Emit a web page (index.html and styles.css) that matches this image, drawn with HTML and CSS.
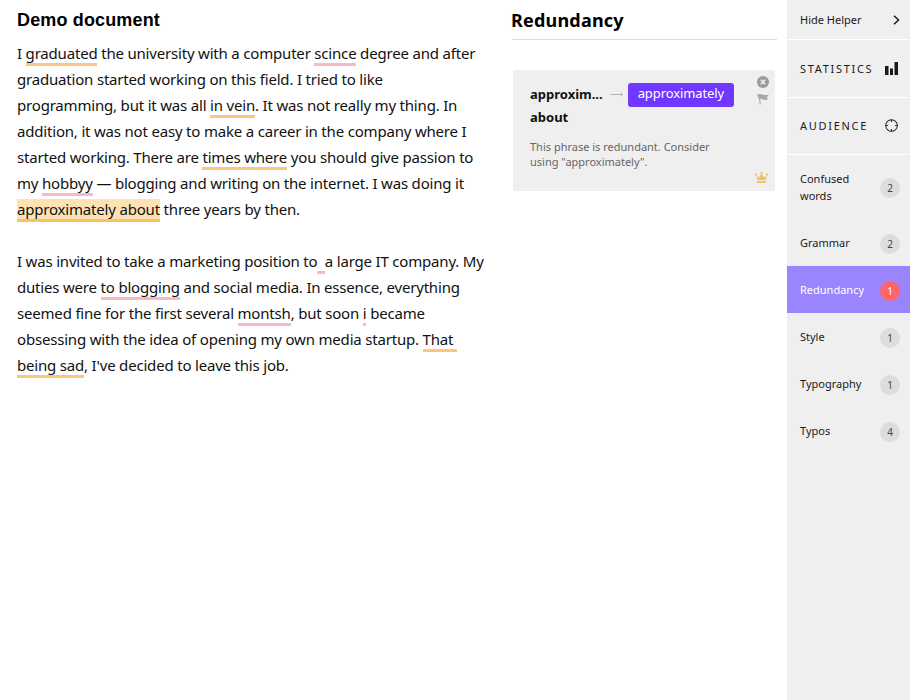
FILE: index.html
```html
<!DOCTYPE html>
<html lang="en">
<head>
<meta charset="utf-8">
<title>Demo document</title>
<link rel="stylesheet" href="styles.css">
</head>
<body>
<div class="app">
  <main class="editor">
    <h1 class="doc-title">Demo document</h1>
    <p class="para">I <span class="orange">graduated</span> the university with a computer <span class="pink">scince</span> degree and after<br>graduation started working on this field. I tried to like<br>programming, but it was all <span class="orange">in vein</span>. It was not really my thing. In<br>addition, it was not easy to make a career in the company where I<br>started working. There are <span class="orange">times where</span> you should give passion to<br>my <span class="pink">hobbyy</span> — blogging and writing on the internet. I was doing it<br><span class="orange active">approximately about</span> three years by then.</p>
    <p class="para">I was invited to take a marketing position to<span class="pink">&nbsp;&nbsp;</span>a large IT company. My<br>duties were <span class="pink">to blogging</span> and social media. In essence, everything<br>seemed fine for the first several <span class="pink">montsh</span>, but soon <span class="pink">i</span> became<br>obsessing with the idea of opening my own media startup. <span class="orange">That&nbsp;<br>being sad</span>, I've decided to leave this job.</p>
  </main>

  <section class="helper">
    <h2 class="helper-title">Redundancy</h2>
    <div class="card">
      <div class="card-actions">
        <svg class="ic-close" width="12" height="12" viewBox="0 0 12 12"><circle cx="6" cy="6" r="6" fill="#9a9a9a"/><path d="M3.8 3.8l4.4 4.4M8.2 3.8l-4.4 4.4" stroke="#efefef" stroke-width="1.6"/></svg>
        <svg class="ic-flag" width="12" height="12" viewBox="0 0 12 12"><path d="M0 1.500C2 .6 4 .8 6 1.600 8 2.300 10 2.200 12 1.800L9.800 4.200l1.200 2C9 7 7 6.800 5.500 6.200 4.500 5.800 3.800 5.800 3.200 6L3.800 11.500H2.800L2 6.500z" fill="#a8a8a8"/></svg>
      </div>
      <div class="fix">
        <span class="orig">approxim...</span>
        <svg class="arrow" width="13" height="7" viewBox="0 0 13 7"><path d="M0 3.500H12.500M10.500 2l2 1.500-2 1.500" fill="none" stroke="#b4b4b4" stroke-width="1"/></svg>
        <span class="repl">approximately</span>
      </div>
      <div class="orig second">about</div>
      <p class="expl">This phrase is redundant. Consider using "approximately".</p>
      <svg class="crown" width="13" height="11" viewBox="0 0 13 11"><path d="M1.500 3.500L3.800 5.500 6.500 1.500 9.200 5.500 11.500 3.500 11 8H2z" fill="#f5c163"/><rect x="2" y="9" width="9" height="2" fill="#f5c163"/><rect x="0" y="1.500" width="2" height="2" fill="#f5c163"/><rect x="11" y="1.500" width="2" height="2" fill="#f5c163"/><rect x="5.500" y="0" width="2" height="2" fill="#f5c163"/></svg>
    </div>
  </section>

  <aside class="side">
    <div class="side-top">
      <span>Hide Helper</span>
      <svg width="7" height="10" viewBox="0 0 7 10"><path d="M1 .8L5.500 5 1 9.200" fill="none" stroke="#1a1a1a" stroke-width="1.500"/></svg>
    </div>
    <div class="side-section stats">
      <span class="caps">STATISTICS</span>
      <svg width="13" height="13" viewBox="0 0 13 13"><rect x="0" y="4" width="3.500" height="9" fill="#1a1a1a"/><rect x="5" y="6.500" width="3" height="6.500" fill="#1a1a1a"/><rect x="9.500" y="0" width="3.500" height="13" fill="#1a1a1a"/></svg>
    </div>
    <div class="side-section aud">
      <span class="caps">AUDIENCE</span>
      <svg width="13" height="13" viewBox="0 0 13 13"><circle cx="6.500" cy="6.500" r="5.800" fill="none" stroke="#333" stroke-width="1.100"/><path d="M6.500 0v3M6.500 10v3M0 6.500h3M10 6.500h3" stroke="#333" stroke-width="1.100"/></svg>
    </div>
    <div class="row tall"><span class="row-label">Confused words</span><span class="count">2</span></div>
    <div class="row"><span class="row-label">Grammar</span><span class="count">2</span></div>
    <div class="row current"><span class="row-label">Redundancy</span><span class="count">1</span></div>
    <div class="row"><span class="row-label">Style</span><span class="count">1</span></div>
    <div class="row"><span class="row-label">Typography</span><span class="count">1</span></div>
    <div class="row"><span class="row-label">Typos</span><span class="count">4</span></div>
  </aside>
</div>
</body>
</html>
```
FILE: styles.css
```css
* { box-sizing: border-box; }
html, body { margin: 0; height: 100%; }
body { font-family: "Noto Sans", sans-serif; color: #1a1a1a; background: #fff; }
.app { display: flex; height: 700px; overflow: hidden; }

.editor { width: 512px; padding: 10px 10px 0 17px; flex: none; }
.doc-title { margin: 0 0 9px; font: bold 18px/21px "Liberation Sans", sans-serif; letter-spacing: .15px; color: #000; }
.para { margin: 0 0 26px; font-size: 15px; line-height: 26px; letter-spacing: -.19px; color: #111; }
.orange { border-bottom: 3px solid #fbc77f; }
.pink { border-bottom: 3px solid #f6b9c6; }
.active { background: #fde3b4; border-bottom-color: #fcc25f; }

.helper { width: 275px; flex: none; padding: 0 10px 0 0; }
.helper-title { margin: 0 0 30px; height: 40px; padding: 8px 0 0; font-size: 18px; line-height: 25px; font-weight: 700; letter-spacing: .2px; text-indent: -1px; color: #000; border-bottom: 1px solid #ddd; }
.card { position: relative; margin-left: 1px; width: 262px; height: 121px; background: #efefef; padding: 13px 40px 0 17px; }
.card-actions { position: absolute; top: 6px; right: 6px; display: flex; flex-direction: column; gap: 5px; }
.card-actions svg { display: block; }
.fix { display: flex; align-items: center; gap: 5px; height: 24px; }
.orig { font-size: 13px; font-weight: 700; color: #111; line-height: 20px; }
.fix .orig { margin-bottom: 2px; }
.second { margin-top: 0; height: 24px; }
.arrow { flex: none; margin: 0 0 1px 2px; }
.repl { background: #6f37ff; color: #fff; font-size: 13px; line-height: 21px; height: 24px; padding: 0 10px; border-radius: 3px; letter-spacing: -.1px; }
.expl { margin: 8px 0 0; font-size: 11px; line-height: 15px; color: #666; }
.crown { position: absolute; right: 7px; bottom: 8px; }

.side { width: 123px; flex: none; background: #efefef; font-size: 11px; color: #1a1a1a; }
.side-top, .side-section, .row { display: flex; align-items: center; justify-content: space-between; padding: 0 10px 0 13px; }
.side-top { height: 40px; border-bottom: 1px solid #fff; }
.side-section { height: 58px; border-bottom: 1px solid #fff; padding-right: 12px; }
.aud { height: 57px; padding-bottom: 1px; }
.caps { letter-spacing: 1.7px; font-size: 11px; }
.row { height: 47px; }
.tall { height: 64px; }
.row-label { display: block; line-height: 17px; width: 70px; }
.count { width: 20px; height: 20px; margin-top: 2px; border-radius: 50%; background: #ddd; color: #444; font-size: 10px; line-height: 20px; text-align: center; flex: none; }
.current { background: #9b85ff; color: #fff; }
.current .count { background: #ff6469; color: #fff; }
```
